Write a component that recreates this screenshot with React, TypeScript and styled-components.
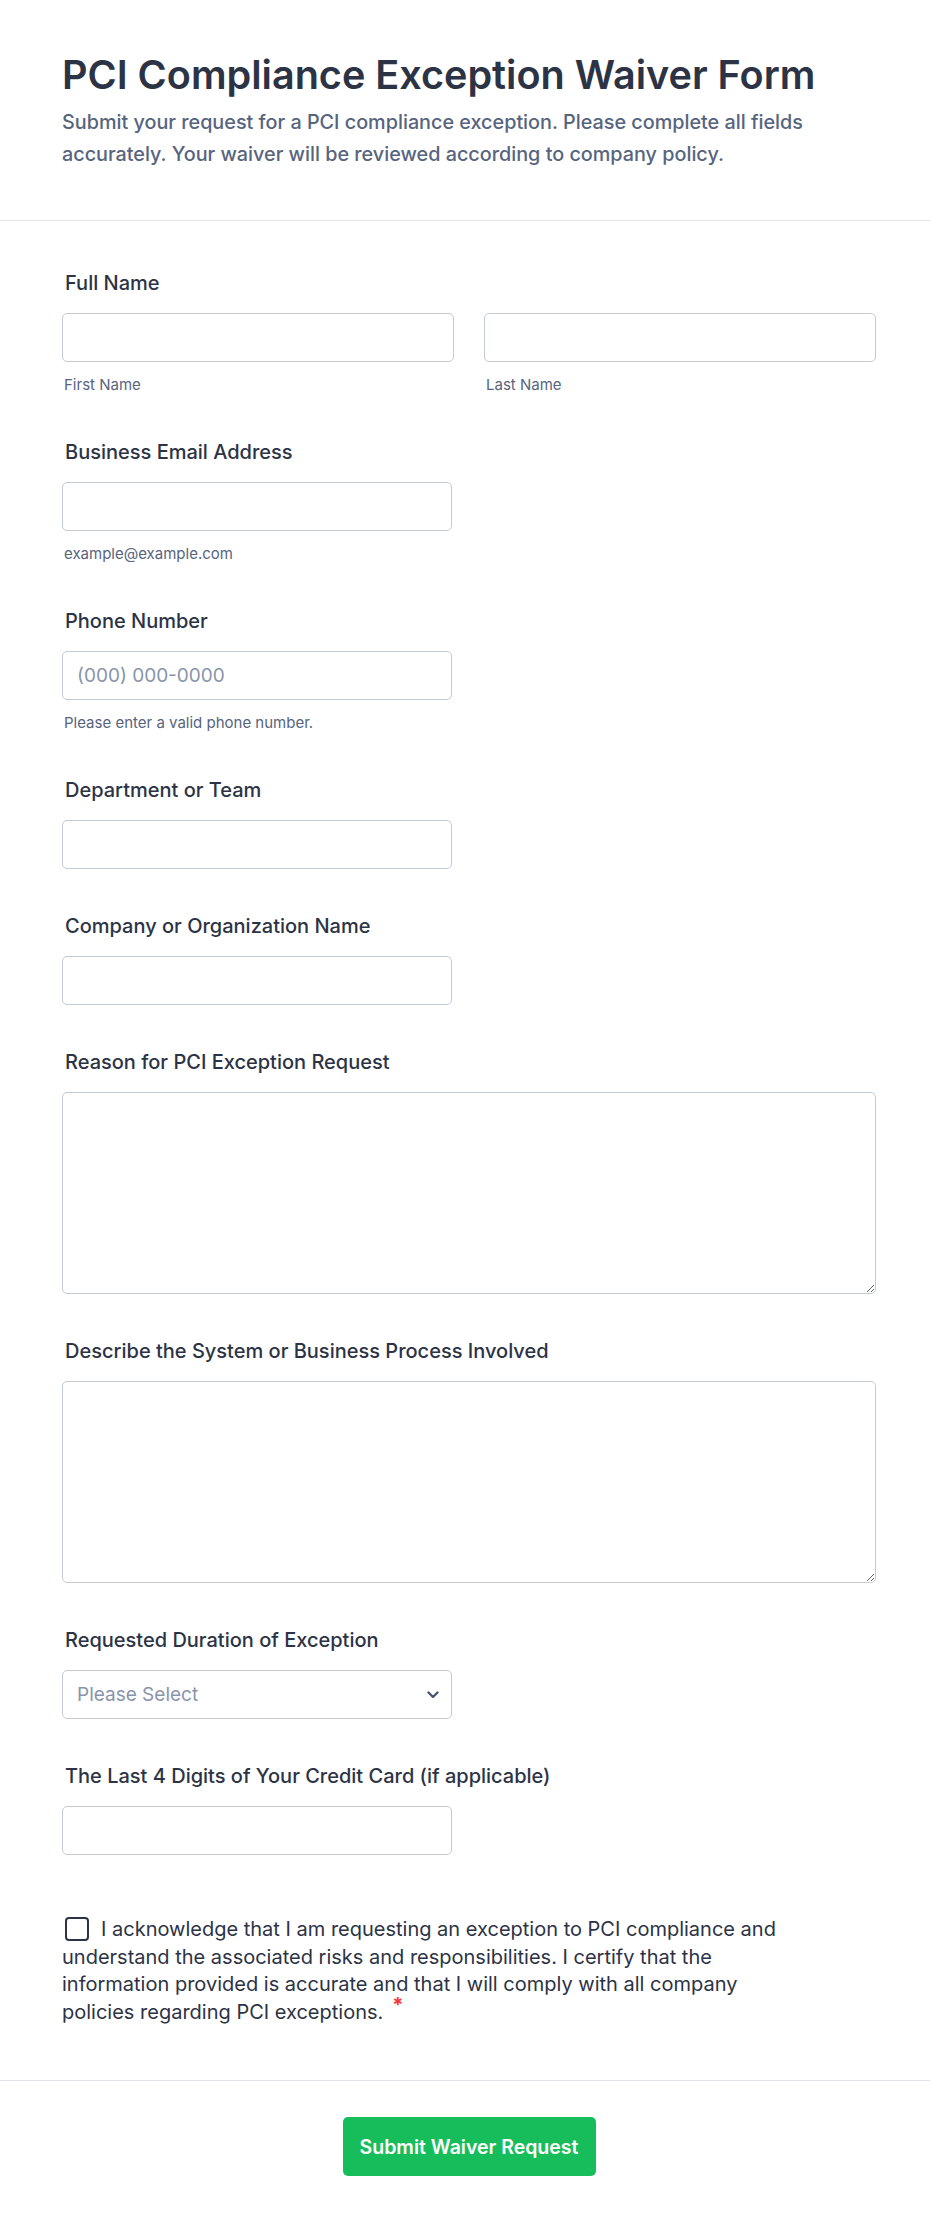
import styled, { createGlobalStyle } from "styled-components";

const GlobalStyle = createGlobalStyle`
  * {
    box-sizing: border-box;
  }
  body {
    margin: 0;
    background: #ffffff;
    font-family: Inter, "Noto Sans", sans-serif;
    color: #2c3345;
  }
`;

const Page = styled.div`
  width: 930px;
  background: #ffffff;
`;

const Header = styled.header`
  padding: 51px 54px 50px 62px;
  border-bottom: 1px solid #e3e5ea;
`;

const Title = styled.h1`
  margin: 0 0 7px;
  font-size: 39.6px;
  line-height: 48px;
  font-weight: 600;
  color: #2c3345;
`;

const Subtitle = styled.p`
  margin: 0;
  font-size: 19.8px;
  line-height: 32px;
  font-weight: 500;
  color: #57647e;
`;

const FormBody = styled.div`
  padding: 50px 54px 54px 62px;
  display: flex;
  flex-direction: column;
  gap: 45px;
`;

const Field = styled.div`
  display: flex;
  flex-direction: column;
`;

const Label = styled.label`
  display: block;
  padding-left: 3px;
  margin-bottom: 18px;
  font-size: 20px;
  line-height: 24px;
  font-weight: 500;
  color: #2c3345;
`;

const Row = styled.div`
  display: grid;
  grid-template-columns: 392px 392px;
  gap: 30px;
`;

const Column = styled.div`
  display: flex;
  flex-direction: column;
`;

const Input = styled.input<{ $wide?: boolean }>`
  width: ${props => (props.$wide ? "392px" : "390px")};
  height: 49px;
  padding: 0 14px;
  border: 1px solid #c3cad8;
  border-radius: 5px;
  background: #ffffff;
  font-family: Inter, sans-serif;
  font-size: 19px;
  color: #2c3345;
  outline: none;

  &::placeholder {
    color: #8894ab;
  }
`;

const TextArea = styled.textarea`
  width: 814px;
  height: 202px;
  padding: 12px 14px;
  border: 1px solid #c3cad8;
  border-radius: 5px;
  font-family: Inter, sans-serif;
  font-size: 19px;
  resize: vertical;
  outline: none;
  display: block;
`;

const SubLabel = styled.span`
  display: block;
  margin-top: 13px;
  padding-left: 2px;
  font-size: 15px;
  line-height: 20px;
  color: #57647e;
`;

const SelectBox = styled.div`
  width: 390px;
  height: 49px;
  border: 1px solid #c3cad8;
  border-radius: 5px;
  display: flex;
  align-items: center;
  justify-content: space-between;
  padding: 0 14px;
  font-size: 19px;
  color: #8894ab;
`;

const Chevron = styled.svg`
  width: 12px;
  height: 8px;
  margin-right: -2px;
`;

const Consent = styled.div`
  margin-top: 16px;
  width: 725px;
  font-size: 20px;
  line-height: 27.5px;
  color: #2c3345;
`;

const CheckBox = styled.input`
  appearance: none;
  width: 24px;
  height: 24px;
  margin: 0 12px 0 3px;
  border: 2px solid #2c3345;
  border-radius: 4px;
  background: #ffffff;
  vertical-align: -5px;
`;

const Required = styled.span`
  margin-left: 9px;
  color: #f23a3c;
  font-size: 20px;
  font-weight: 700;
  line-height: 0;
  vertical-align: 7px;
`;

const Footer = styled.div`
  border-top: 1px solid #e3e5ea;
  padding: 36px 54px 50px 62px;
  display: flex;
  justify-content: center;
`;

const SubmitButton = styled.button`
  width: 253px;
  height: 59px;
  border: none;
  border-radius: 5px;
  background: #18bd5b;
  color: #ffffff;
  font-family: Inter, sans-serif;
  font-size: 19.5px;
  font-weight: 600;
`;

const singleFields = [
  { label: "Business Email Address", sub: "example@example.com" },
  { label: "Phone Number", sub: "Please enter a valid phone number.", placeholder: "(000) 000-0000" },
  { label: "Department or Team" },
  { label: "Company or Organization Name" },
];

const App = () => {
  return (
    <Page>
      <GlobalStyle />
      <Header>
        <Title>PCI Compliance Exception Waiver Form</Title>
        <Subtitle>
          Submit your request for a PCI compliance exception. Please complete all fields
          accurately. Your waiver will be reviewed according to company policy.
        </Subtitle>
      </Header>

      <FormBody>
        <Field>
          <Label>Full Name</Label>
          <Row>
            <Column>
              <Input $wide />
              <SubLabel>First Name</SubLabel>
            </Column>
            <Column>
              <Input $wide />
              <SubLabel>Last Name</SubLabel>
            </Column>
          </Row>
        </Field>

        {singleFields.map(field => (
          <Field key={field.label}>
            <Label>{field.label}</Label>
            <Input placeholder={field.placeholder} />
            {field.sub && <SubLabel>{field.sub}</SubLabel>}
          </Field>
        ))}

        <Field>
          <Label>Reason for PCI Exception Request</Label>
          <TextArea />
        </Field>

        <Field>
          <Label>Describe the System or Business Process Involved</Label>
          <TextArea />
        </Field>

        <Field>
          <Label>Requested Duration of Exception</Label>
          <SelectBox>
            Please Select
            <Chevron viewBox="0 0 12 8">
              <path d="M1.5 1.5l4.5 4.5 4.5-4.5" fill="none" stroke="#4a5670" strokeWidth="2.4" strokeLinecap="round" strokeLinejoin="round" />
            </Chevron>
          </SelectBox>
        </Field>

        <Field>
          <Label>The Last 4 Digits of Your Credit Card (if applicable)</Label>
          <Input />
        </Field>

        <Consent>
          <CheckBox type="checkbox" />
          I acknowledge that I am requesting an exception to PCI compliance and understand the
          associated risks and responsibilities. I certify that the information provided is
          accurate and that I will comply with all company policies regarding PCI exceptions.
          <Required>*</Required>
        </Consent>
      </FormBody>

      <Footer>
        <SubmitButton>Submit Waiver Request</SubmitButton>
      </Footer>
    </Page>
  );
};

export default App;
